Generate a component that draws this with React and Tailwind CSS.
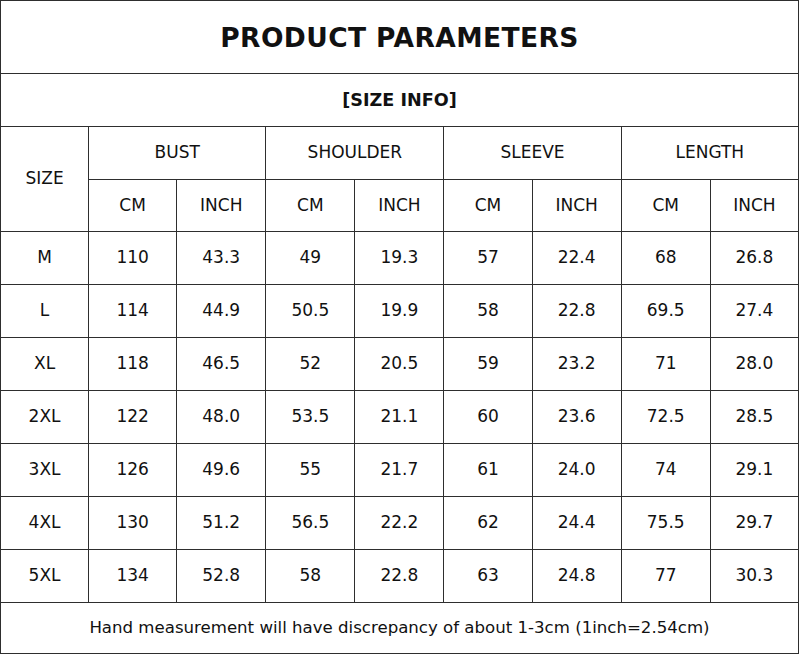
import React from "react";

const rows = [
  ["M", "110", "43.3", "49", "19.3", "57", "22.4", "68", "26.8"],
  ["L", "114", "44.9", "50.5", "19.9", "58", "22.8", "69.5", "27.4"],
  ["XL", "118", "46.5", "52", "20.5", "59", "23.2", "71", "28.0"],
  ["2XL", "122", "48.0", "53.5", "21.1", "60", "23.6", "72.5", "28.5"],
  ["3XL", "126", "49.6", "55", "21.7", "61", "24.0", "74", "29.1"],
  ["4XL", "130", "51.2", "56.5", "22.2", "62", "24.4", "75.5", "29.7"],
  ["5XL", "134", "52.8", "58", "22.8", "63", "24.8", "77", "30.3"],
];

const groups = ["BUST", "SHOULDER", "SLEEVE", "LENGTH"];
const widths = [88, 88, 89, 89, 89, 88, 89, 89, 88];

const cell = "border border-[#2e2e2e] text-center align-middle p-0";

export default function App() {
  return (
    <div className="w-[800px] h-[655px] bg-white font-['DejaVu_Sans',sans-serif] text-[#111]">
      <table className="w-[799px] table-fixed border-collapse">
        <colgroup>
          {widths.map((w, i) => (
            <col key={i} style={{ width: w }} />
          ))}
        </colgroup>
        <tbody>
          <tr className="h-[73px]">
            <td colSpan={9} className={`${cell} text-[26.5px] font-bold tracking-[0.4px] pt-[2px]`}>
              PRODUCT PARAMETERS
            </td>
          </tr>
          <tr className="h-[53px]">
            <td colSpan={9} className={`${cell} text-[17.6px] font-bold`}>
              [SIZE INFO]
            </td>
          </tr>
          <tr className="h-[53px]">
            <td rowSpan={2} className={`${cell} text-[17px]`}>
              SIZE
            </td>
            {groups.map((g) => (
              <td key={g} colSpan={2} className={`${cell} text-[17px]`}>
                {g}
              </td>
            ))}
          </tr>
          <tr className="h-[52px]">
            {groups.map((g) => (
              <React.Fragment key={g}>
                <td className={`${cell} text-[17px]`}>CM</td>
                <td className={`${cell} text-[17px]`}>INCH</td>
              </React.Fragment>
            ))}
          </tr>
          {rows.map((r) => (
            <tr key={r[0]} className="h-[53px]">
              {r.map((v, i) => (
                <td key={i} className={`${cell} text-[17px]`}>
                  {v}
                </td>
              ))}
            </tr>
          ))}
          <tr className="h-[51px]">
            <td colSpan={9} className={`${cell} text-[16.6px]`}>
              Hand measurement will have discrepancy of about 1-3cm (1inch=2.54cm)
            </td>
          </tr>
        </tbody>
      </table>
    </div>
  );
}
